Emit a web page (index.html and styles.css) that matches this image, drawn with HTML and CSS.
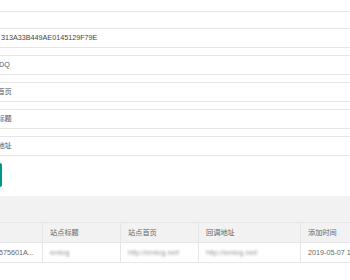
FILE: index.html
```html
<!DOCTYPE html>
<html>
<head>
<meta charset="utf-8">
<link rel="stylesheet" href="styles.css">
</head>
<body>
<div class="form">
  <div class="input first"></div>
  <div class="input">313A33B449AE0145129F79E</div>
  <div class="input cut-sm">DQ</div>
  <div class="input cut-cjk">站点首页</div>
  <div class="input cut-cjk">站点标题</div>
  <div class="input cut-cjk">回调地址</div>
  <button class="btn">提交</button>
</div>
<div class="toolbar"></div>
<div class="grid">
  <div class="th"></div>
  <div class="th">站点标题</div>
  <div class="th">站点首页</div>
  <div class="th">回调地址</div>
  <div class="th">添加时间</div>
  <div class="td">6575601A...</div>
  <div class="td"><span class="blur">emlog</span></div>
  <div class="td"><span class="blur">http://emlog.net/</span></div>
  <div class="td"><span class="blur">http://emlog.net/</span></div>
  <div class="td">2019-05-07 16:32:10</div>
</div>
</body>
</html>
```
FILE: styles.css
```css
html, body {
  margin: 0;
  padding: 0;
  background: #fff;
  overflow: hidden;
  font-family: "Liberation Sans", "Noto Sans CJK SC", sans-serif;
}

.form {
  margin: -8px -20px 0;
}

.input {
  box-sizing: border-box;
  height: 20px;
  border: 1px solid #e6e6e6;
  margin-bottom: 7px;
  padding-left: 20px;
  font-size: 7.2px;
  line-height: 18px;
  color: #444;
  white-space: nowrap;
  overflow: hidden;
}

.input.first {
  margin-bottom: 16px;
}

.input.cut-sm {
  text-indent: -2px;
  color: #555;
}

.input.cut-cjk {
  text-indent: -18px;
  color: #555;
}

.btn {
  display: block;
  width: 60px;
  height: 24px;
  margin: 0 0 9px -38px;
  border: none;
  border-radius: 2px;
  background: #009688;
  color: #fff;
  font-size: 8px;
  font-family: inherit;
  padding: 0;
}

.toolbar {
  height: 26px;
  background: #f2f2f2;
}

.grid {
  display: grid;
  grid-template-columns: 54px 78px 78px 102px 160px;
  margin-left: -12px;
  font-size: 7.2px;
  color: #666;
}

.th, .td {
  box-sizing: border-box;
  border-top: 1px solid #e6e6e6;
  border-left: 1px solid #e6e6e6;
  padding: 0 7px;
  white-space: nowrap;
  overflow: hidden;
}

.th:first-child, .td:nth-child(6) {
  border-left: none;
}

.th {
  height: 20px;
  line-height: 19px;
  background: #f2f2f2;
}

.td {
  height: 21px;
  line-height: 19px;
  border-bottom: 1px solid #e6e6e6;
  background: #fff;
}

.blur {
  color: #999;
  filter: blur(1px);
}
```
